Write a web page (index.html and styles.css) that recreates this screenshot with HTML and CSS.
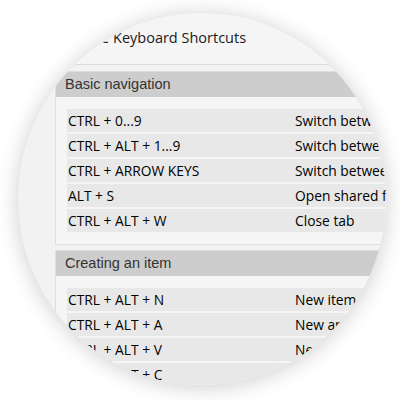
FILE: index.html
```html
<!DOCTYPE html>
<html>
<head>
<meta charset="utf-8">
<link rel="stylesheet" href="styles.css">
</head>
<body>
<div class="lens">
  <div class="dialog">
    <div class="title"><span class="title-pre">Use the </span><span class="title-main">Keyboard Shortcuts</span></div>
    <div class="sections">
      <div class="section">
        <div class="section-head">Basic navigation</div>
        <div class="rows">
          <div class="row"><span class="key">CTRL + 0...9</span><span class="desc">Switch between modules</span></div>
          <div class="row"><span class="key">CTRL + ALT + 1...9</span><span class="desc">Switch between folders</span></div>
          <div class="row"><span class="key">CTRL + ARROW KEYS</span><span class="desc">Switch between panes</span></div>
          <div class="row"><span class="key">ALT + S</span><span class="desc">Open shared folder</span></div>
          <div class="row"><span class="key">CTRL + ALT + W</span><span class="desc">Close tab</span></div>
        </div>
      </div>
      <div class="section">
        <div class="section-head">Creating an item</div>
        <div class="rows">
          <div class="row"><span class="key">CTRL + ALT + N</span><span class="desc">New item</span></div>
          <div class="row"><span class="key">CTRL + ALT + A</span><span class="desc">New appointment</span></div>
          <div class="row"><span class="key">CTRL + ALT + V</span><span class="desc">New task</span></div>
          <div class="row"><span class="key">CTRL + ALT + C</span><span class="desc">New contact</span></div>
        </div>
      </div>
    </div>
  </div>
</div>
</body>
</html>
```
FILE: styles.css
```css
html, body {
  margin: 0;
  padding: 0;
  background: #ffffff;
}
body {
  width: 400px;
  height: 400px;
  overflow: hidden;
}
.lens {
  width: 368px;
  height: 372px;
  margin: 13px 0 0 18px;
  border-radius: 50%;
  overflow: hidden;
  background: #f2f2f2;
  box-shadow: 0 2px 22px rgba(0, 0, 0, 0.2);
}
.dialog {
  width: 800px;
}
.title {
  display: flex;
  height: 52px;
  box-sizing: border-box;
  padding: 15px 0 0 0;
  border-bottom: 1px solid #dcdcdc;
  background: #f5f5f5;
  font-family: "Open Sans", "DejaVu Sans", sans-serif;
  font-size: 14.5px;
  line-height: 20px;
  color: #1a1a1a;
  white-space: pre;
}
.title-pre {
  width: 95px;
  text-align: right;
  flex: none;
}
.sections {
  padding-top: 6px;
  padding-left: 37px;
}
.section {
  border: 1px solid #dedede;
  border-right: none;
  background: #f5f5f5;
  margin-bottom: 5px;
}
.section-head {
  height: 25px;
  line-height: 25px;
  background: #cdcdcd;
  padding-left: 9px;
  font-family: "Liberation Sans", Arial, sans-serif;
  font-size: 14.5px;
  color: #333;
}
.rows {
  display: flex;
  flex-direction: column;
  gap: 2px;
  padding: 12px 0 12px 11px;
}
.row {
  display: flex;
  height: 23px;
  align-items: center;
  background: #e8e8e8;
  font-family: "Open Sans", "DejaVu Sans", sans-serif;
  font-size: 13.8px;
  color: #000;
}
.key {
  width: 227px;
  padding-left: 1px;
  flex: none;
}
.desc {
  white-space: nowrap;
}
```
